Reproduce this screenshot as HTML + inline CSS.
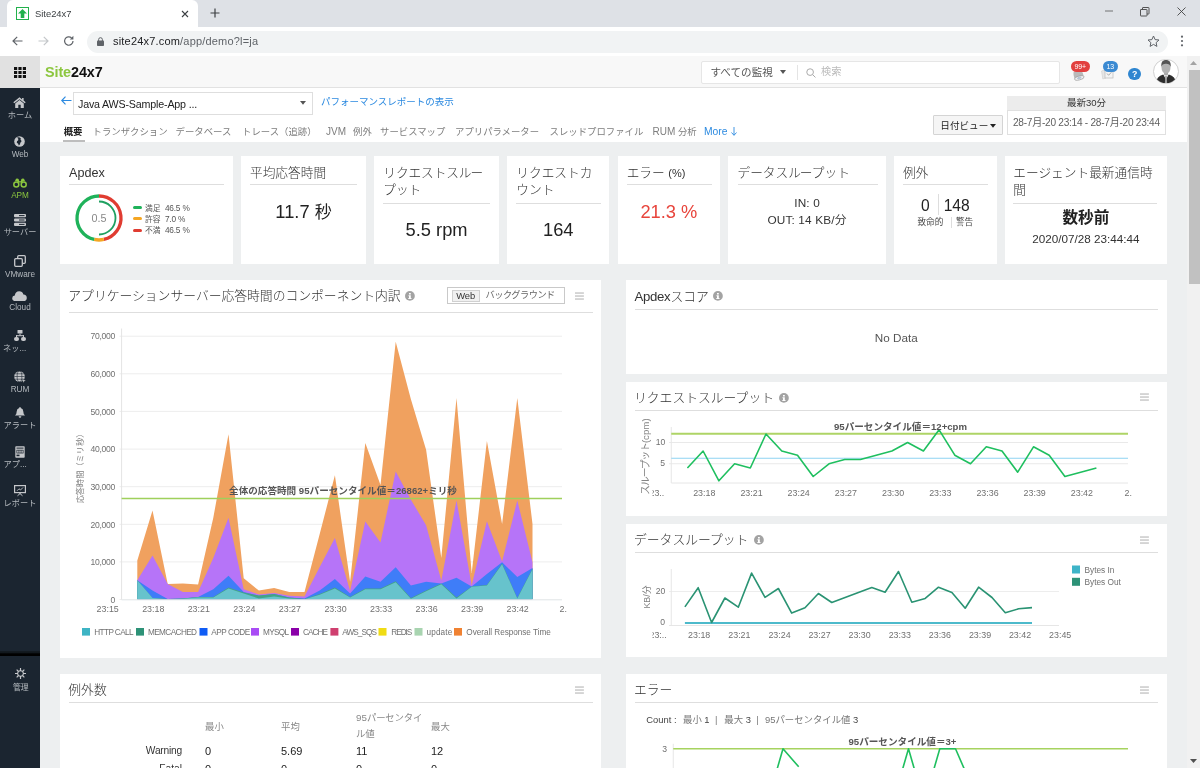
<!DOCTYPE html>
<html lang="ja">
<head>
<meta charset="utf-8">
<title>Site24x7</title>
<style>
*{box-sizing:border-box;margin:0;padding:0}
html,body{width:1200px;height:768px;overflow:hidden;background:#edeff0}
body{will-change:transform;font-family:"Liberation Sans","Noto Sans CJK JP",sans-serif;color:#333;position:relative;font-size:10px}
.a{position:absolute}
.t{position:absolute;white-space:nowrap;line-height:1}
.card{position:absolute;background:#fff}
.hr{position:absolute;height:1px;background:#dedede}
svg{position:absolute;overflow:visible}
.ct{font-size:12.800px;color:#333;font-weight:300;letter-spacing:0}

.sl{position:absolute;left:0;width:40px;text-align:center;white-space:nowrap;line-height:1;font-size:8.2px;color:#b4b9be}
.si{position:absolute}
.tb{position:absolute;top:126.600px;white-space:nowrap;line-height:1;font-size:9.400px;color:#7d7d7d}
.kt{position:absolute;white-space:nowrap;line-height:17.300px;font-size:12.700px;color:#333;font-weight:300}
.kv{position:absolute;white-space:nowrap;line-height:1;text-align:center;color:#222}

</style>
</head>
<body>
<!-- chrome -->
<div class="a" style="left:0;top:0;width:1200px;height:27px;background:#dee1e6"></div>
<div class="a" style="left:7px;top:0;width:191px;height:27px;background:#fff;border-radius:6px 6px 0 0"></div>
<div class="a" style="left:0;top:27px;width:1200px;height:29px;background:#fff"></div>
<!-- favicon -->
<div class="a" style="left:16px;top:7px;width:13px;height:13px;border:1px solid #22b14c;background:#fff"></div>
<svg style="left:18px;top:9px" width="9" height="9" viewBox="0 0 9 9"><path d="M4.5 0 L9 4.5 H6.3 V9 H2.7 V4.5 H0 Z" fill="#22b14c"/></svg>
<div class="t" style="left:35px;top:9px;font-size:9.4px;color:#3c4043">Site24x7</div>
<svg style="left:181px;top:10px" width="8" height="8" viewBox="0 0 8 8"><path d="M1 1 L7 7 M7 1 L1 7" stroke="#3c4043" stroke-width="1.1" fill="none"/></svg>
<svg style="left:210px;top:8px" width="10" height="10" viewBox="0 0 10 10"><path d="M5 0.5 V9.5 M0.5 5 H9.5" stroke="#3c4043" stroke-width="1.2" fill="none"/></svg>
<!-- window controls -->
<svg style="left:1105px;top:10px" width="10" height="2" viewBox="0 0 10 2"><path d="M0 1 H8" stroke="#555" stroke-width="0.800"/></svg>
<svg style="left:1140px;top:7px" width="10" height="10" viewBox="0 0 10 10"><rect x="0.5" y="2.5" width="6.5" height="6.5" rx="0.400" fill="none" stroke="#444" stroke-width="0.9"/><path d="M2.5 2.5 V1 Q2.5 0.5 3 0.5 H8.500 Q9 0.5 9 1 V6.500 Q9 7 8.500 7 H7" fill="none" stroke="#444" stroke-width="0.9"/></svg>
<svg style="left:1177px;top:7px" width="9" height="9" viewBox="0 0 9 9"><path d="M0.5 0.5 L8.5 8.5 M8.5 0.5 L0.5 8.5" stroke="#444" stroke-width="0.9" fill="none"/></svg>
<!-- nav -->
<svg style="left:12px;top:36px" width="11" height="10" viewBox="0 0 11 10"><path d="M5.2 0.8 L1 5 L5.2 9.2 M1 5 H10.5" stroke="#5f6368" stroke-width="1.2" fill="none"/></svg>
<svg style="left:38px;top:36px" width="11" height="10" viewBox="0 0 11 10"><path d="M5.8 0.8 L10 5 L5.8 9.2 M10 5 H0.5" stroke="#c4c7ca" stroke-width="1.2" fill="none"/></svg>
<svg style="left:63px;top:35px" width="12" height="12" viewBox="0 0 12 12"><path d="M10 6 A4.2 4.2 0 1 1 8.6 2.9" stroke="#5f6368" stroke-width="1.2" fill="none"/><path d="M10.4 0.8 V4.4 H6.8 Z" fill="#5f6368"/></svg>
<div class="a" style="left:87px;top:30.500px;width:1081px;height:22px;border-radius:11px;background:#f1f3f4"></div>
<svg style="left:97px;top:37px" width="7" height="9" viewBox="0 0 7 9"><rect x="0" y="3.6" width="7" height="5.4" rx="0.8" fill="#5f6368"/><path d="M1.6 4 V2.6 A1.9 1.9 0 0 1 5.4 2.6 V4" stroke="#5f6368" stroke-width="1" fill="none"/></svg>
<div class="t" style="left:113px;top:36px;font-size:11px;color:#202124;letter-spacing:0.19px">site24x7.com<span style="color:#5f6368">/app/demo?l=ja</span></div>
<svg style="left:1147px;top:35px" width="13" height="12" viewBox="0 0 13 12"><path d="M6.5 1 L8.1 4.6 L12 5 L9.1 7.6 L9.9 11.4 L6.5 9.4 L3.1 11.4 L3.9 7.6 L1 5 L4.9 4.6 Z" fill="none" stroke="#5f6368" stroke-width="1"/></svg>
<svg style="left:1180px;top:35px" width="4" height="12" viewBox="0 0 4 12"><circle cx="2" cy="1.7" r="1.1" fill="#5f6368"/><circle cx="2" cy="6" r="1.1" fill="#5f6368"/><circle cx="2" cy="10.3" r="1.1" fill="#5f6368"/></svg>

<!-- header -->
<div class="a" style="left:0;top:56px;width:1200px;height:32px;background:#f8f8f8;border-bottom:1px solid #e2e2e2"></div>
<div class="a" style="left:0;top:56px;width:40px;height:32px;background:#e1e1e1"></div>
<svg style="left:14px;top:67px" width="12" height="11" viewBox="0 0 12 11"><g fill="#111"><rect x="0" y="0" width="3.2" height="3"/><rect x="4.4" y="0" width="3.2" height="3"/><rect x="8.8" y="0" width="3.2" height="3"/><rect x="0" y="4" width="3.2" height="3"/><rect x="4.4" y="4" width="3.2" height="3"/><rect x="8.8" y="4" width="3.2" height="3"/><rect x="0" y="8" width="3.2" height="3"/><rect x="4.4" y="8" width="3.2" height="3"/><rect x="8.8" y="8" width="3.2" height="3"/></g></svg>
<div class="t" style="left:45px;top:65px;font-size:14.4px;font-weight:bold;letter-spacing:-0.1px;color:#111"><span style="color:#8cc63f">Site</span>24x7</div>
<!-- search -->
<div class="a" style="left:701px;top:61px;width:359px;height:23px;background:#fff;border:1px solid #e6e6e6;border-radius:2px"></div>
<div class="a" style="left:797px;top:65px;width:1px;height:15px;background:#e4e4e4"></div>
<div class="t" style="left:710.500px;top:66.800px;font-size:10.600px;color:#555">すべての監視</div>
<svg style="left:780px;top:70px" width="6" height="4" viewBox="0 0 6 4"><path d="M0 0 H6 L3 4 Z" fill="#555"/></svg>
<svg style="left:806px;top:67.500px" width="10" height="10" viewBox="0 0 9 9"><circle cx="3.7" cy="3.7" r="3" fill="none" stroke="#aaa" stroke-width="0.9"/><path d="M6 6 L8.5 8.5" stroke="#aaa" stroke-width="0.9"/></svg>
<div class="t" style="left:821px;top:67px;font-size:10.2px;color:#bbb">検索</div>
<!-- alarm icon + badge -->
<svg style="left:1072.500px;top:69.500px" width="13" height="11" viewBox="0 0 13 11"><g transform="rotate(-14 6 6)"><path d="M1.500 1 H9.500 Q11 4.500 10.500 7.500 H1 Q0.500 4 1.500 1Z" fill="#b9b9b9"/><ellipse cx="5.800" cy="8" rx="4.900" ry="1.900" fill="#f2f2f2" stroke="#9d9d9d" stroke-width="0.700"/><ellipse cx="5.800" cy="8" rx="1.800" ry="0.600" fill="none" stroke="#6f8fb5" stroke-width="0.500"/></g></svg>
<div class="a" style="left:1071px;top:60.5px;width:18.5px;height:11px;border-radius:5.5px;background:#e2403f"></div>
<div class="t" style="left:1071px;top:62.5px;width:18.5px;text-align:center;font-size:7px;color:#fff;letter-spacing:-0.2px">99+</div>
<svg style="left:1101px;top:69px" width="13" height="11" viewBox="0 0 13 11"><path d="M0.5 2 L4 0.8 L5 9 L1.8 10 Z" fill="#e6e6e6" stroke="#c8c8c8" stroke-width="0.5"/><rect x="4" y="1.5" width="8" height="7.5" fill="#f4f4f4" stroke="#bbb" stroke-width="0.7"/><path d="M6 4.5 L7.6 6.3 L10.4 3.2" fill="none" stroke="#999" stroke-width="0.8"/></svg>
<div class="a" style="left:1103px;top:60.5px;width:14.6px;height:11px;border-radius:5.5px;background:#3b8ad2"></div>
<div class="t" style="left:1103px;top:62.5px;width:14.6px;text-align:center;font-size:7px;color:#fff">13</div>
<div class="a" style="left:1128.4px;top:67.7px;width:12.6px;height:12.6px;border-radius:50%;background:#2f86d0"></div>
<div class="t" style="left:1128.4px;top:69.800px;width:12.6px;text-align:center;font-size:8.800px;font-weight:bold;color:#fff">?</div>
<!-- avatar -->
<div class="a" style="left:1153.3px;top:58.6px;width:25.4px;height:25.4px;border-radius:50%;background:#fff;border:1px solid #d0d0d0;overflow:hidden">
<svg style="left:-0.300px;top:-0.500px" width="24" height="24" viewBox="0 0 24 24"><rect x="10" y="12.500" width="4" height="4" fill="#a6a6a6"/><ellipse cx="12" cy="8.600" rx="4.500" ry="6.200" fill="#b2b2b2"/><path d="M7.300 8 Q6.600 1 12 0.800 Q17.400 1 16.700 8 Q15.800 4.600 12 4.700 Q8.200 4.600 7.300 8Z" fill="#555"/><path d="M2 24 Q2.500 17.500 9.200 15.600 L12 19.500 L14.800 15.600 Q21.500 17.500 22 24 Z" fill="#2d2d2d"/><path d="M9.800 15.400 L12 21.500 L14.200 15.400 L12 16.600 Z" fill="#ececec"/><path d="M11.300 16.800 H12.700 L13.100 24 H10.900 Z" fill="#9a9a9a"/></svg>
</div>

<!-- sidebar -->
<div class="a" style="left:0;top:88px;width:40px;height:680px;background:#1b2530"></div>
<div class="a" style="left:0;top:650.500px;width:40px;height:5.500px;background:linear-gradient(#141b22 0,#10161b 40%,#000 55%,#000 100%)"></div>
<!-- home -->
<svg class="si" style="left:13px;top:97px" width="13" height="11" viewBox="0 0 13 11"><path d="M6.5 0.300 L0.300 5.300 L1.300 6.300 L6.5 2.200 L11.7 6.300 L12.7 5.300 L10.6 3.600 V0.900 H9.100 V2.400 Z" fill="#c6c8cb"/><path d="M2.200 6.500 L6.5 3.100 L10.8 6.500 V11 H7.700 V7.800 H5.300 V11 H2.200 Z" fill="#c6c8cb"/></svg>
<div class="sl" style="top:111.500px">ホーム</div>
<!-- web -->
<svg class="si" style="left:14px;top:136px" width="11" height="11" viewBox="0 0 11 11"><circle cx="5.500" cy="5.500" r="5.300" fill="#c6c8cb"/><path d="M3 1.500 Q5 2.500 4.200 4.200 Q2.500 5 2.800 6.800 Q4.500 7.200 4.800 9.500 Q6.500 8.500 6.300 6.800 Q8 6 7.300 4.500 Q6 4 6.800 2.200 Q5.500 0.800 3 1.500Z" fill="#1b2530"/></svg>
<div class="sl" style="top:150.500px">Web</div>
<!-- apm -->
<svg class="si" style="left:12.500px;top:177.500px" width="14" height="10" viewBox="0 0 14 10"><g fill="none" stroke="#8cc63f" stroke-width="1.500"><circle cx="3.300" cy="6.400" r="2.500"/><circle cx="10.700" cy="6.400" r="2.500"/></g><path d="M1.800 3.600 L3 0.800 Q4.500 0 5.600 1 L6.200 3.200 H7.800 L8.400 1 Q9.500 0 11 0.800 L12.200 3.600 L10.700 3.100 L8.300 4.600 H5.700 L3.300 3.100 Z" fill="#8cc63f"/></svg>
<div class="sl" style="top:191.500px;color:#8cc63f">APM</div>
<!-- server -->
<svg class="si" style="left:14px;top:214px" width="12" height="12" viewBox="0 0 12 12"><g fill="#c6c8cb"><rect x="0" y="0" width="12" height="3.200" rx="1"/><rect x="0" y="4.400" width="12" height="3.200" rx="1"/><rect x="0" y="8.800" width="12" height="3.200" rx="1"/></g><g fill="#1b2530"><rect x="5" y="1.100" width="5.500" height="1"/><rect x="5" y="5.500" width="5.500" height="1"/><rect x="5" y="9.900" width="5.500" height="1"/></g></svg>
<div class="sl" style="top:228.500px">サーバー</div>
<!-- vmware -->
<svg class="si" style="left:14px;top:255px" width="12" height="12" viewBox="0 0 12 12"><g fill="none" stroke="#c6c8cb" stroke-width="1.300"><rect x="3.700" y="0.700" width="7.600" height="7.600" rx="1"/><rect x="0.700" y="3.700" width="7.600" height="7.600" rx="1" fill="#1b2530"/></g></svg>
<div class="sl" style="top:271px">VMware</div>
<!-- cloud -->
<svg class="si" style="left:12px;top:291px" width="15" height="10" viewBox="0 0 15 10"><path d="M3.500 10 Q0.200 10 0.200 7.200 Q0.200 4.800 2.800 4.500 Q3.200 0.500 7.200 0.300 Q10.500 0.300 11.400 3.500 Q14.800 3.800 14.800 6.900 Q14.800 10 11.500 10 Z" fill="#c6c8cb"/></svg>
<div class="sl" style="top:303.500px">Cloud</div>
<!-- network -->
<svg class="si" style="left:14px;top:330px" width="12" height="11" viewBox="0 0 12 11"><g fill="#c6c8cb"><rect x="3.500" y="0" width="5" height="3.600" rx="0.500"/><rect x="0" y="7" width="5" height="4" rx="2"/><rect x="7" y="7" width="5" height="4" rx="2"/><rect x="5.500" y="3.600" width="1" height="2"/><rect x="2" y="5.200" width="8" height="1"/><rect x="2" y="5.200" width="1" height="2"/><rect x="9" y="5.200" width="1" height="2"/></g></svg>
<div class="sl" style="top:344.500px;left:3px;text-align:left">ネッ...</div>
<!-- rum -->
<svg class="si" style="left:14px;top:371px" width="12" height="12" viewBox="0 0 12 12"><circle cx="5.500" cy="5.500" r="5.300" fill="#c6c8cb"/><g fill="none" stroke="#1b2530" stroke-width="0.600"><ellipse cx="5.500" cy="5.500" rx="2.400" ry="5.300"/><path d="M0.200 5.500 H10.800 M1 2.800 H10 M1 8.200 H10"/></g><path d="M8 8 L12 9.500 L10.300 10.300 L9.500 12 Z" fill="#c6c8cb" stroke="#1b2530" stroke-width="0.400"/></svg>
<div class="sl" style="top:385.500px">RUM</div>
<!-- alert -->
<svg class="si" style="left:15px;top:407px" width="10" height="11" viewBox="0 0 10 11"><path d="M5 0 Q5.800 0 5.800 0.900 Q8.300 1.700 8.300 4.500 Q8.300 7.300 10 8.500 H0 Q1.700 7.300 1.700 4.500 Q1.700 1.700 4.200 0.900 Q4.200 0 5 0Z" fill="#c6c8cb"/><path d="M3.600 9.300 H6.400 Q6.200 10.800 5 10.800 Q3.800 10.800 3.600 9.300Z" fill="#c6c8cb"/></svg>
<div class="sl" style="top:422px">アラート</div>
<!-- app -->
<svg class="si" style="left:15px;top:446px" width="10" height="12" viewBox="0 0 10 12"><rect x="0.300" y="0.300" width="9.400" height="11.400" rx="0.800" fill="#c6c8cb"/><g fill="#1b2530"><rect x="1.500" y="1.600" width="7" height="1"/><rect x="1.500" y="3.800" width="7" height="3.600"/><rect x="1.500" y="8.600" width="3" height="1.600"/></g><g fill="#c6c8cb"><rect x="2.200" y="4.500" width="1.400" height="2.200"/><rect x="4.300" y="4.500" width="1.400" height="2.200"/><rect x="6.400" y="4.500" width="1.400" height="2.200"/></g></svg>
<div class="sl" style="top:461px;left:3.500px;text-align:left">アプ...</div>
<!-- report -->
<svg class="si" style="left:14px;top:485px" width="12" height="11" viewBox="0 0 12 11"><rect x="0.600" y="0.600" width="10.800" height="7" fill="none" stroke="#c6c8cb" stroke-width="1.200"/><path d="M3 5.800 L5 3.800 L6.500 5 L9 2.500" fill="none" stroke="#c6c8cb" stroke-width="0.900"/><path d="M6 7.600 V9 M3.500 10.800 L6 8.600 L8.500 10.800" fill="none" stroke="#c6c8cb" stroke-width="1"/></svg>
<div class="sl" style="top:499.500px">レポート</div>
<!-- admin -->
<svg class="si" style="left:15.300px;top:668.200px" width="11" height="11" viewBox="0 0 12 12"><g stroke="#c6c8cb" stroke-width="1.300"><path d="M6 0 V12 M0 6 H12 M1.800 1.800 L10.200 10.200 M10.200 1.800 L1.800 10.200"/></g><circle cx="6" cy="6" r="3.600" fill="#c6c8cb"/><circle cx="6" cy="6" r="2.500" fill="#1b2530"/></svg>
<div class="sl" style="top:684.300px;left:0.800px;font-size:7.900px">管理</div>

<!-- subheader -->
<div class="a" style="left:40px;top:88px;width:1147px;height:54px;background:#fff"></div>
<svg style="left:60.500px;top:96px" width="10.500" height="9" viewBox="0 0 10.500 9"><path d="M4.500 0.700 L0.800 4.500 L4.500 8.300 M0.800 4.500 H10.500" fill="none" stroke="#2c8ae0" stroke-width="1.150"/></svg>
<div class="a" style="left:73px;top:92px;width:240px;height:22.500px;border:1px solid #dedede;background:#fff"></div>
<div class="t" style="left:78px;top:99px;font-size:10.700px;color:#222;letter-spacing:-0.180px">Java AWS-Sample-App ...</div>
<svg style="left:300px;top:101px" width="6" height="4" viewBox="0 0 6 4"><path d="M0 0 H6 L3 3.800 Z" fill="#555"/></svg>
<div class="t" style="left:321px;top:96.500px;font-size:9.500px;color:#2c8ae0">パフォーマンスレポートの表示</div>
<div class="tb" style="left:63.700px;color:#222;font-weight:bold">概要</div>
<div class="a" style="left:62.700px;top:139.600px;width:22.300px;height:2px;background:#bdbdbd"></div>
<div class="tb" style="left:92.500px">トランザクション</div>
<div class="tb" style="left:175.500px">データベース</div>
<div class="tb" style="left:242px">トレース（追跡）</div>
<div class="tb" style="left:326px;font-size:10px;top:127.300px">JVM</div>
<div class="tb" style="left:353px">例外</div>
<div class="tb" style="left:380px">サービスマップ</div>
<div class="tb" style="left:455px">アプリパラメーター</div>
<div class="tb" style="left:549.500px">スレッドプロファイル</div>
<div class="tb" style="left:652.500px"><span style="font-size:10px">RUM</span> 分析</div>
<div class="tb" style="left:704px;color:#2c8ae0;font-size:10.300px;top:127.300px">More</div>
<svg style="left:731px;top:127px" width="6" height="9" viewBox="0 0 6 9"><path d="M3 0 V8.200 M0.500 5.500 L3 8.300 L5.500 5.500" fill="none" stroke="#2c8ae0" stroke-width="0.900"/></svg>
<!-- date view -->
<div class="a" style="left:933.400px;top:115px;width:69.400px;height:20.300px;border:1px solid #d4d4d4;background:#f5f5f5;border-radius:1px"></div>
<div class="t" style="left:940.300px;top:120.500px;font-size:9.600px;color:#222">日付ビュー</div>
<svg style="left:990px;top:124px" width="6" height="4" viewBox="0 0 6 4"><path d="M0 0 H6 L3 3.800 Z" fill="#222"/></svg>
<div class="a" style="left:1006.700px;top:96px;width:159.800px;height:14.500px;background:#ececec"></div>
<div class="t" style="left:1006.700px;top:98px;width:159.800px;text-align:center;font-size:9.500px;color:#333">最新30分</div>
<div class="a" style="left:1006.700px;top:110px;width:159.800px;height:24.700px;background:#fff;border:1px solid #e0e0e0"></div>
<div class="t" style="left:1013px;top:117.800px;font-size:10.100px;color:#606060;letter-spacing:-0.260px">28-7月-20 23:14 - 28-7月-20 23:44</div>

<!-- kpi -->
<!-- Apdex -->
<div class="card" style="left:60px;top:156px;width:173px;height:108px"></div>
<div class="kt" style="left:69px;top:164.500px;font-size:12.600px">Apdex</div>
<div class="hr" style="left:69px;top:184.300px;width:155px"></div>
<svg style="left:75.400px;top:193.800px" width="48" height="48" viewBox="-24 -24 48 48">
<g fill="none" stroke-width="3.300">
<path d="M0 -22 A22 22 0 0 1 4.800 21.470" stroke="#e03c31"/>
<path d="M4.800 21.470 A22 22 0 0 1 -4.800 21.470" stroke="#f5a623"/>
<path d="M-4.800 21.470 A22 22 0 0 1 0 -22" stroke="#1fb25a"/>
<path d="M0 -16.500 A16.500 16.500 0 0 1 0 16.500" stroke="#1fa060" stroke-width="1.800"/>
</g>
<text x="0" y="3.900" text-anchor="middle" font-size="10.800" fill="#888" font-family="Liberation Sans, sans-serif">0.5</text>
</svg>
<div class="a" style="left:133px;top:205.900px;width:8.500px;height:3px;border-radius:1.500px;background:#1fb25a"></div>
<div class="a" style="left:133px;top:217.200px;width:8.500px;height:3px;border-radius:1.500px;background:#f5a623"></div>
<div class="a" style="left:133px;top:228.600px;width:8.500px;height:3px;border-radius:1.500px;background:#e03c31"></div>
<div class="t" style="left:145px;top:203.500px;font-size:7.800px;color:#555">満足&nbsp; <span style="font-size:8.300px;letter-spacing:-0.200px">46.5 %</span></div>
<div class="t" style="left:145px;top:214.800px;font-size:7.800px;color:#555">許容&nbsp; <span style="font-size:8.300px;letter-spacing:-0.200px">7.0 %</span></div>
<div class="t" style="left:145px;top:226.200px;font-size:7.800px;color:#555">不満&nbsp; <span style="font-size:8.300px;letter-spacing:-0.200px">46.5 %</span></div>
<!-- avg resp -->
<div class="card" style="left:241px;top:156px;width:125px;height:108px"></div>
<div class="kt" style="left:250px;top:164.500px">平均応答時間</div>
<div class="hr" style="left:250px;top:184.300px;width:107px"></div>
<div class="kv" style="left:241px;top:202.500px;width:125px;font-size:18.300px">11.7 <span style="font-size:17px">秒</span></div>
<!-- req throughput -->
<div class="card" style="left:374.300px;top:156px;width:124.500px;height:108px"></div>
<div class="kt" style="left:383.300px;top:164.500px;letter-spacing:-0.100px">リクエストス<span style="letter-spacing:-1.100px">ル</span>ー<br>プット</div>
<div class="hr" style="left:383.300px;top:202.600px;width:107px"></div>
<div class="kv" style="left:374.300px;top:220.500px;width:124.500px;font-size:18.300px">5.5 rpm</div>
<!-- req count -->
<div class="card" style="left:507.300px;top:156px;width:102px;height:108px"></div>
<div class="kt" style="left:516.300px;top:164.500px">リクエストカ<br>ウント</div>
<div class="hr" style="left:516.300px;top:202.600px;width:84.500px"></div>
<div class="kv" style="left:507.300px;top:220.500px;width:102px;font-size:18.300px">164</div>
<!-- error -->
<div class="card" style="left:617.700px;top:156px;width:102.300px;height:108px"></div>
<div class="kt" style="left:626.700px;top:164.500px">エラー <span style="font-size:11px">(%)</span></div>
<div class="hr" style="left:626.700px;top:184.300px;width:85px"></div>
<div class="kv" style="left:617.700px;top:203px;width:102.300px;font-size:18.300px;color:#e8453c">21.3 %</div>
<!-- data throughput -->
<div class="card" style="left:728.300px;top:156px;width:157.500px;height:108px"></div>
<div class="kt" style="left:737.500px;top:164.500px">データス<span style="letter-spacing:-1.100px">ル</span>ープット</div>
<div class="hr" style="left:737.500px;top:184.300px;width:140px"></div>
<div class="kv" style="left:728.300px;top:197.500px;width:157.500px;font-size:11.800px;letter-spacing:0.150px;color:#333">IN: 0</div>
<div class="kv" style="left:728.300px;top:215.300px;width:157.500px;font-size:11.800px;letter-spacing:0.150px;color:#333">OUT: 14 KB/分</div>
<!-- exceptions -->
<div class="card" style="left:894.200px;top:156px;width:102.500px;height:108px"></div>
<div class="kt" style="left:903px;top:164.500px">例外</div>
<div class="hr" style="left:903px;top:184.300px;width:85.300px"></div>
<div class="kv" style="left:915.400px;top:197.500px;width:20px;font-size:15.600px">0</div>
<div class="a" style="left:938px;top:194px;width:1px;height:21px;background:#ddd"></div>
<div class="kv" style="left:941.700px;top:197.500px;width:30px;font-size:15.600px">148</div>
<div class="t" style="left:917.500px;top:218.300px;font-size:8.600px;color:#444">致命的</div>
<div class="a" style="left:950.500px;top:217px;width:1px;height:11px;background:#ddd"></div>
<div class="t" style="left:956px;top:218.300px;font-size:8.600px;color:#444">警告</div>
<!-- agent -->
<div class="card" style="left:1005px;top:156px;width:161.700px;height:108px"></div>
<div class="kt" style="left:1013.300px;top:164.500px">エージェント最新通信時<br>間</div>
<div class="hr" style="left:1013.300px;top:202.600px;width:144.200px"></div>
<div class="kv" style="left:1005px;top:210.300px;width:161.700px;font-size:15.600px;font-weight:bold">数秒前</div>
<div class="kv" style="left:1005px;top:233px;width:161.700px;font-size:11.700px;color:#333">2020/07/28 23:44:44</div>

<!-- mainchart -->
<div class="card" style="left:60px;top:280px;width:541px;height:377.500px"></div>
<div class="t ct" style="left:68.300px;top:290px">アプリケーションサーバー応答時間のコンポーネント内訳</div>
<svg style="left:405.400px;top:291.100px" width="9.800" height="9.800" viewBox="0 0 9.800 9.800"><circle cx="4.900" cy="4.900" r="4.900" fill="#a3a3a3"/><path d="M4 2 H5.800 V3.500 H4 Z M3.500 4.300 H5.800 V7 H6.500 V7.900 H3.300 V7 H4 V5.200 H3.500 Z" fill="#fff"/></svg>
<div class="hr" style="left:69px;top:312px;width:523.500px"></div>
<div class="a" style="left:447px;top:287px;width:118px;height:17px;border:1px solid #c9c9c9;background:#fff"></div>
<div class="a" style="left:451.500px;top:289.500px;width:28.500px;height:12px;border:1px solid #d0d0d0;background:#f0f0f0"></div>
<div class="t" style="left:451.500px;top:291px;width:28.500px;text-align:center;font-size:9.400px;color:#333">Web</div>
<div class="t" style="left:485.500px;top:291px;font-size:9.200px;color:#666;letter-spacing:-0.480px">バックグラウンド</div>
<svg style="left:575px;top:292px" width="9" height="8" viewBox="0 0 9 8"><g fill="#d0d0d0"><rect x="0" y="0.200" width="8.900" height="1.700"/><rect x="0" y="3.200" width="8.900" height="1.700"/><rect x="0" y="6.200" width="8.900" height="1.700"/></g></svg>
<svg style="left:0;top:0" width="1200" height="768" viewBox="0 0 1200 768" font-family="Liberation Sans, Noto Sans CJK JP, sans-serif">
<path d="M119.500 599.5 H562" stroke="#ededed" stroke-width="1"/>
<text x="115" y="602.7" text-anchor="end" font-size="8.600" letter-spacing="-0.300" fill="#707070">0</text>
<path d="M119.500 561.9 H562" stroke="#ededed" stroke-width="1"/>
<text x="115" y="565.1" text-anchor="end" font-size="8.600" letter-spacing="-0.300" fill="#707070">10,000</text>
<path d="M119.500 524.3 H562" stroke="#ededed" stroke-width="1"/>
<text x="115" y="527.5" text-anchor="end" font-size="8.600" letter-spacing="-0.300" fill="#707070">20,000</text>
<path d="M119.500 486.7 H562" stroke="#ededed" stroke-width="1"/>
<text x="115" y="489.9" text-anchor="end" font-size="8.600" letter-spacing="-0.300" fill="#707070">30,000</text>
<path d="M119.500 449.1 H562" stroke="#ededed" stroke-width="1"/>
<text x="115" y="452.3" text-anchor="end" font-size="8.600" letter-spacing="-0.300" fill="#707070">40,000</text>
<path d="M119.500 411.4 H562" stroke="#ededed" stroke-width="1"/>
<text x="115" y="414.6" text-anchor="end" font-size="8.600" letter-spacing="-0.300" fill="#707070">50,000</text>
<path d="M119.500 373.8 H562" stroke="#ededed" stroke-width="1"/>
<text x="115" y="377.0" text-anchor="end" font-size="8.600" letter-spacing="-0.300" fill="#707070">60,000</text>
<path d="M119.500 336.2 H562" stroke="#ededed" stroke-width="1"/>
<text x="115" y="339.4" text-anchor="end" font-size="8.600" letter-spacing="-0.300" fill="#707070">70,000</text>
<path d="M121.600 328.500 V599.700" stroke="#e4e4e4" stroke-width="1"/>
<polygon points="137.3,560.6 152.5,510.6 167.7,584 182.9,583.5 198.1,584.6 213.3,517.7 228.5,434.3 243.7,578.3 258.9,590.6 274.1,588 289.3,591.9 304.5,591.9 319.7,534 334.9,475.3 350.1,581.8 365.3,443.1 380.5,485.1 395.7,341.7 410.9,399.3 426.1,449.7 441.3,558 456.5,398.1 471.7,573 486.9,441 502.1,524 517.3,398 532.5,524 532.5,599.2 137.3,599.2" fill="#f0a15f" />
<polygon points="137.3,580.2 152.5,555.4 167.7,584 182.9,591.9 198.1,591.9 213.3,558 228.5,517.7 243.7,589.3 258.9,594.5 274.1,593 289.3,595.8 304.5,596.5 319.7,567 334.9,538 350.1,591 365.3,521.6 380.5,542.4 395.7,471.6 410.9,499.7 426.1,525.3 441.3,580.5 456.5,500.5 471.7,585.6 486.9,521.2 502.1,561.4 517.3,500.5 532.5,562.2 532.5,599.2 137.3,599.2" fill="#b674f8" />
<polygon points="137.3,580.2 152.5,590.6 167.7,599 182.9,598.4 198.1,597 213.3,589.3 228.5,575.7 243.7,591.9 258.9,595.8 274.1,594 289.3,597.6 304.5,598.6 319.7,590.6 334.9,578.9 350.1,593.5 365.3,576.4 380.5,581.8 395.7,567.2 410.9,585.5 426.1,581.8 441.3,583.6 456.5,577.8 471.7,586.4 486.9,573.9 502.1,562.2 517.3,577 532.5,568 532.5,599.2 137.3,599.2" fill="#3f7df8" />
<polygon points="137.3,580.2 152.5,598 167.7,599 182.9,598.5 198.1,597 213.3,597 228.5,587.5 243.7,592.5 258.9,595.5 274.1,594 289.3,597.6 304.5,599 319.7,594 334.9,587.5 350.1,597 365.3,588.5 380.5,588.5 395.7,581.3 410.9,598 426.1,590.5 441.3,583.6 456.5,597.5 471.7,586.4 486.9,585 502.1,563.5 517.3,598 532.5,568.5 532.5,599.2 137.3,599.2" fill="#43a487" />
<polygon points="137.3,580.2 152.5,598 167.7,599.2 182.9,598.8 198.1,597.5 213.3,597.5 228.5,588.5 243.7,593.5 258.9,598.5 274.1,596.5 289.3,598.5 304.5,599.2 319.7,594.8 334.9,588.4 350.1,597.6 365.3,589.3 380.5,589.3 395.7,582.2 410.9,598.8 426.1,591.3 441.3,584.2 456.5,598.4 471.7,586.8 486.9,585.6 502.1,564.3 517.3,598.6 532.5,569.2 532.5,599.2 137.3,599.2" fill="#67c3cc" />
<path d="M121.600 599.900 H562" stroke="#e6ebed" stroke-width="1"/>
<path d="M121.600 498.500 H562" stroke="#9fd05c" stroke-width="1.300"/>
<text x="343" y="494.200" text-anchor="middle" font-size="9.600" font-weight="bold" fill="#555">全体の応答時間 95パーセンタイル値＝26862+ミリ秒</text>
<text x="107.7" y="612" text-anchor="middle" font-size="8.900" fill="#707070">23:15</text>
<text x="153.3" y="612" text-anchor="middle" font-size="8.900" fill="#707070">23:18</text>
<text x="198.8" y="612" text-anchor="middle" font-size="8.900" fill="#707070">23:21</text>
<text x="244.4" y="612" text-anchor="middle" font-size="8.900" fill="#707070">23:24</text>
<text x="289.9" y="612" text-anchor="middle" font-size="8.900" fill="#707070">23:27</text>
<text x="335.5" y="612" text-anchor="middle" font-size="8.900" fill="#707070">23:30</text>
<text x="381.1" y="612" text-anchor="middle" font-size="8.900" fill="#707070">23:33</text>
<text x="426.6" y="612" text-anchor="middle" font-size="8.900" fill="#707070">23:36</text>
<text x="472.2" y="612" text-anchor="middle" font-size="8.900" fill="#707070">23:39</text>
<text x="517.7" y="612" text-anchor="middle" font-size="8.900" fill="#707070">23:42</text>
<text x="559.500" y="612" font-size="8.900" fill="#707070">2.</text>
<text transform="translate(82.500,466.500) rotate(-90)" text-anchor="middle" font-size="8.200" fill="#808080">応答時間（ミリ秒）</text>
<rect x="82" y="628" width="8" height="7.600" fill="#3eb4c4"/>
<text x="94.3" y="634.800" font-size="8.200" fill="#707070" textLength="39.2" lengthAdjust="spacing">HTTP CALL</text>
<rect x="136" y="628" width="8" height="7.600" fill="#2d9277"/>
<text x="148" y="634.800" font-size="8.200" fill="#707070" textLength="49" lengthAdjust="spacing">MEMCACHED</text>
<rect x="199.5" y="628" width="8" height="7.600" fill="#0f5cf5"/>
<text x="211.3" y="634.800" font-size="8.200" fill="#707070" textLength="39" lengthAdjust="spacing">APP CODE</text>
<rect x="251" y="628" width="8" height="7.600" fill="#a94cf5"/>
<text x="263" y="634.800" font-size="8.200" fill="#707070" textLength="26" lengthAdjust="spacing">MYSQL</text>
<rect x="291" y="628" width="8" height="7.600" fill="#8a00a8"/>
<text x="303" y="634.800" font-size="8.200" fill="#707070" textLength="25" lengthAdjust="spacing">CACHE</text>
<rect x="330.4" y="628" width="8" height="7.600" fill="#cf3f6f"/>
<text x="342.2" y="634.800" font-size="8.200" fill="#707070" textLength="34.7" lengthAdjust="spacing">AWS_SQS</text>
<rect x="378.5" y="628" width="8" height="7.600" fill="#f0dc14"/>
<text x="391.3" y="634.800" font-size="8.200" fill="#707070" textLength="21" lengthAdjust="spacing">REDIS</text>
<rect x="414.5" y="628" width="8" height="7.600" fill="#a8d4b0"/>
<text x="426.6" y="634.800" font-size="8.200" fill="#707070" textLength="25.6" lengthAdjust="spacing">update</text>
<rect x="454" y="628" width="8" height="7.600" fill="#f08232"/>
<text x="466.3" y="634.800" font-size="8.200" fill="#707070" textLength="84.5" lengthAdjust="spacing">Overall Response Time</text>
</svg>
<!-- right -->
<div class="card" style="left:625.500px;top:280px;width:541.500px;height:94px"></div>
<div class="t ct" style="left:634.500px;top:290px"><span style="font-size:13.200px;letter-spacing:-0.300px">Apdex</span>スコア</div>
<svg style="left:713.300px;top:291.200px" width="9.800" height="9.800" viewBox="0 0 9.800 9.800"><circle cx="4.900" cy="4.900" r="4.900" fill="#a3a3a3"/><path d="M4 2 H5.800 V3.500 H4 Z M3.500 4.300 H5.800 V7 H6.500 V7.900 H3.300 V7 H4 V5.200 H3.500 Z" fill="#fff"/></svg>
<div class="hr" style="left:634.500px;top:309px;width:523.500px"></div>
<div class="t" style="left:625.500px;top:331.500px;width:541.500px;text-align:center;font-size:11.700px;color:#555">No Data</div>
<div class="card" style="left:625.500px;top:382px;width:541.500px;height:134.300px"></div>
<div class="t ct" style="left:634px;top:391.500px">リクエストスループット</div>
<svg style="left:779.350px;top:393.100px" width="9.800" height="9.800" viewBox="0 0 9.800 9.800"><circle cx="4.900" cy="4.900" r="4.900" fill="#a3a3a3"/><path d="M4 2 H5.800 V3.500 H4 Z M3.500 4.300 H5.800 V7 H6.500 V7.900 H3.300 V7 H4 V5.200 H3.500 Z" fill="#fff"/></svg>
<div class="hr" style="left:634.500px;top:410px;width:523.500px"></div>
<svg style="left:1140px;top:393px" width="9" height="8" viewBox="0 0 9 8"><g fill="#d0d0d0"><rect x="0" y="0.200" width="8.900" height="1.700"/><rect x="0" y="3.200" width="8.900" height="1.700"/><rect x="0" y="6.200" width="8.900" height="1.700"/></g></svg>
<div class="card" style="left:625.500px;top:523.800px;width:541.500px;height:133.500px"></div>
<div class="t ct" style="left:634px;top:533.500px">データスループット</div>
<svg style="left:753.850px;top:534.600px" width="9.800" height="9.800" viewBox="0 0 9.800 9.800"><circle cx="4.900" cy="4.900" r="4.900" fill="#a3a3a3"/><path d="M4 2 H5.800 V3.500 H4 Z M3.500 4.300 H5.800 V7 H6.500 V7.900 H3.300 V7 H4 V5.200 H3.500 Z" fill="#fff"/></svg>
<div class="hr" style="left:634.500px;top:552px;width:523.500px"></div>
<svg style="left:1140px;top:535.5px" width="9" height="8" viewBox="0 0 9 8"><g fill="#d0d0d0"><rect x="0" y="0.200" width="8.900" height="1.700"/><rect x="0" y="3.200" width="8.900" height="1.700"/><rect x="0" y="6.200" width="8.900" height="1.700"/></g></svg>
<div class="card" style="left:625.500px;top:673.800px;width:541.500px;height:100px"></div>
<div class="t ct" style="left:634px;top:683.500px">エラー</div>
<div class="hr" style="left:634.500px;top:702px;width:523.500px"></div>
<svg style="left:1140px;top:685.5px" width="9" height="8" viewBox="0 0 9 8"><g fill="#d0d0d0"><rect x="0" y="0.200" width="8.900" height="1.700"/><rect x="0" y="3.200" width="8.900" height="1.700"/><rect x="0" y="6.200" width="8.900" height="1.700"/></g></svg>
<div class="t" style="left:646.3px;top:715.300px;font-size:9.400px;color:#777"><span style="color:#444">Count :</span></div>
<div class="t" style="left:683px;top:715.300px;font-size:9.400px;color:#777">最小 <span style="color:#444">1</span></div>
<div class="t" style="left:715px;top:715.300px;font-size:9.400px;color:#777">|</div>
<div class="t" style="left:724.3px;top:715.300px;font-size:9.400px;color:#777">最大 <span style="color:#444">3</span></div>
<div class="t" style="left:756.3px;top:715.300px;font-size:9.400px;color:#777">|</div>
<div class="t" style="left:765px;top:715.300px;font-size:9.400px;color:#777">95パーセンタイル値 <span style="color:#444">3</span></div>
<svg style="left:0;top:0" width="1200" height="768" viewBox="0 0 1200 768" font-family="Liberation Sans, Noto Sans CJK JP, sans-serif">
<clipPath id="c1"><rect x="640" y="418.500" width="20" height="80"/></clipPath>
<path d="M669 442.500 H1128 M669 463.750 H1128" stroke="#e9e9e9" stroke-width="1"/>
<path d="M671.250 427 V483 H1128" fill="none" stroke="#e6e6e6" stroke-width="1"/>
<text x="665" y="445" text-anchor="end" font-size="8.600" letter-spacing="-0.200" fill="#707070">10</text>
<text x="665" y="466.200" text-anchor="end" font-size="8.600" fill="#707070">5</text>
<g clip-path="url(#c1)"><text transform="translate(649,456.500) rotate(-90)" text-anchor="middle" font-size="9.700" fill="#858585" letter-spacing="-1">スループット<tspan letter-spacing="0">(cpm)</tspan></text></g>
<path d="M671.250 458.250 H1128" stroke="#8fd3f2" stroke-width="1"/>
<path d="M671.250 433.750 H1128" stroke="#aed466" stroke-width="1.900"/>
<polyline points="687.4,468.0 703.1,451.0 718.9,480.8 734.6,463.8 750.3,468.0 766.0,434.0 781.8,451.0 797.5,455.2 813.2,476.5 829.0,463.8 844.7,459.5 860.4,459.5 876.2,455.2 891.9,451.0 907.6,442.5 923.4,451.0 939.1,429.8 954.8,455.2 970.5,463.8 986.3,446.8 1002.0,451.0 1017.7,472.2 1033.5,446.8 1049.2,455.2 1064.9,476.5 1080.7,472.2 1096.4,468.0" fill="none" stroke="#1fbf5f" stroke-width="1.600" stroke-linejoin="round"/>
<text x="900.500" y="429.600" text-anchor="middle" font-size="9.600" font-weight="bold" fill="#555">95パーセンタイル値＝12+cpm</text>
<text x="704.3" y="496" text-anchor="middle" font-size="8.900" fill="#707070">23:18</text>
<text x="751.5" y="496" text-anchor="middle" font-size="8.900" fill="#707070">23:21</text>
<text x="798.7" y="496" text-anchor="middle" font-size="8.900" fill="#707070">23:24</text>
<text x="845.9" y="496" text-anchor="middle" font-size="8.900" fill="#707070">23:27</text>
<text x="893.1" y="496" text-anchor="middle" font-size="8.900" fill="#707070">23:30</text>
<text x="940.3" y="496" text-anchor="middle" font-size="8.900" fill="#707070">23:33</text>
<text x="987.5" y="496" text-anchor="middle" font-size="8.900" fill="#707070">23:36</text>
<text x="1034.7" y="496" text-anchor="middle" font-size="8.900" fill="#707070">23:39</text>
<text x="1081.9" y="496" text-anchor="middle" font-size="8.900" fill="#707070">23:42</text>
<clipPath id="c3"><rect x="652.500" y="485" width="30" height="20"/></clipPath><g clip-path="url(#c3)"><text x="649.500" y="496" font-size="8.900" fill="#707070">23..</text></g>
<text x="1124.500" y="496" font-size="8.900" fill="#707070">2.</text>
<path d="M669 591.500 H1059" stroke="#ededed" stroke-width="1"/>
<path d="M671.250 569 V625.500" fill="none" stroke="#e6e6e6" stroke-width="1"/>
<path d="M669 625.500 H1059" fill="none" stroke="#e6e6e6" stroke-width="1"/>
<text x="665" y="593.800" text-anchor="end" font-size="8.600" letter-spacing="-0.200" fill="#707070">20</text>
<text x="665" y="625.300" text-anchor="end" font-size="8.600" fill="#707070">0</text>
<text transform="translate(649.500,597) rotate(-90)" text-anchor="middle" font-size="8.900" fill="#808080">KB/分</text>
<path d="M684.9 623 H1032.0" stroke="#4dbacb" stroke-width="1.800"/>
<polyline points="684.9,606.9 698.2,587.7 711.6,622.5 724.9,598.0 738.3,607.2 751.6,573.1 765.0,597.3 778.4,588.5 791.7,613.1 805.0,607.7 818.4,593.5 831.8,602.5 845.1,597.5 858.4,592.4 871.8,587.6 885.1,592.3 898.5,571.5 911.8,602.2 925.2,598.4 938.5,587.2 951.9,592.4 965.2,608.2 978.6,587.2 992.0,597.5 1005.3,612.8 1018.6,608.8 1032.0,607.6" fill="none" stroke="#2a9373" stroke-width="1.600" stroke-linejoin="round"/>
<text x="699.2" y="638.300" text-anchor="middle" font-size="8.900" fill="#707070">23:18</text>
<text x="739.4" y="638.300" text-anchor="middle" font-size="8.900" fill="#707070">23:21</text>
<text x="779.5" y="638.300" text-anchor="middle" font-size="8.900" fill="#707070">23:24</text>
<text x="819.5" y="638.300" text-anchor="middle" font-size="8.900" fill="#707070">23:27</text>
<text x="859.6" y="638.300" text-anchor="middle" font-size="8.900" fill="#707070">23:30</text>
<text x="899.8" y="638.300" text-anchor="middle" font-size="8.900" fill="#707070">23:33</text>
<text x="939.9" y="638.300" text-anchor="middle" font-size="8.900" fill="#707070">23:36</text>
<text x="980.0" y="638.300" text-anchor="middle" font-size="8.900" fill="#707070">23:39</text>
<text x="1020.0" y="638.300" text-anchor="middle" font-size="8.900" fill="#707070">23:42</text>
<text x="1060.2" y="638.300" text-anchor="middle" font-size="8.900" fill="#707070">23:45</text>
<clipPath id="c2"><rect x="652.500" y="625" width="30" height="20"/></clipPath><g clip-path="url(#c2)"><text x="649.500" y="638.300" font-size="8.900" fill="#707070">23:..</text></g>
<rect x="1072" y="565.500" width="8" height="8" fill="#3eb4c8"/><rect x="1072" y="577.800" width="8" height="8" fill="#2d9277"/>
<text x="1084.500" y="572.700" font-size="8.300" fill="#707070">Bytes In</text><text x="1084.500" y="585" font-size="8.300" fill="#707070">Bytes Out</text>
<path d="M673.250 743.750 V768" stroke="#e6e6e6" stroke-width="1"/>
<path d="M673.250 748.750 H1128" stroke="#a6d35f" stroke-width="1.400"/>
<text x="667" y="751.800" text-anchor="end" font-size="8.600" fill="#707070">3</text>
<polyline points="767.3,802.8 783.0,748.8 798.7,766.8" fill="none" stroke="#1fbf5f" stroke-width="1.600" stroke-linejoin="round"/>
<polyline points="892.8,802.8 908.5,748.8 924.1,802.8 939.8,748.8 955.5,748.8 971.2,784.8" fill="none" stroke="#1fbf5f" stroke-width="1.600" stroke-linejoin="round"/>
<text x="902.500" y="744.600" text-anchor="middle" font-size="9.600" font-weight="bold" fill="#555">95パーセンタイル値＝3+</text>
</svg>
<!-- bottom -->
<div class="card" style="left:60px;top:673.800px;width:541px;height:100px"></div>
<div class="t ct" style="left:68.300px;top:683.500px">例外数</div>
<div class="hr" style="left:69px;top:702px;width:523.500px"></div>
<svg style="left:575px;top:685.5px" width="9" height="8" viewBox="0 0 9 8"><g fill="#d0d0d0"><rect x="0" y="0.200" width="8.900" height="1.700"/><rect x="0" y="3.200" width="8.900" height="1.700"/><rect x="0" y="6.200" width="8.900" height="1.700"/></g></svg>
<div class="t" style="left:205px;top:721.700px;font-size:9.400px;color:#888">最小</div>
<div class="t" style="left:281px;top:721.700px;font-size:9.400px;color:#888">平均</div>
<div class="t" style="left:431px;top:721.700px;font-size:9.400px;color:#888">最大</div>
<div class="t" style="left:356px;top:710.300px;font-size:9.400px;color:#888;line-height:16px;letter-spacing:-0.150px"><span style="letter-spacing:0;font-size:9.800px">95</span>パーセンタイ<br>ル値</div>
<div class="t" style="left:100px;top:746px;width:82px;text-align:right;font-size:10.200px;color:#333;letter-spacing:-0.200px">Warning</div>
<div class="t" style="left:205px;top:745.500px;font-size:11px;color:#222">0</div>
<div class="t" style="left:281px;top:745.500px;font-size:11px;color:#222">5.69</div>
<div class="t" style="left:356px;top:745.500px;font-size:11px;color:#222">11</div>
<div class="t" style="left:431px;top:745.500px;font-size:11px;color:#222">12</div>
<div class="t" style="left:100px;top:764px;width:82px;text-align:right;font-size:10.200px;color:#333">Fatal</div>
<div class="t" style="left:205px;top:763.500px;font-size:11px;color:#222">0</div>
<div class="t" style="left:281px;top:763.500px;font-size:11px;color:#222">0</div>
<div class="t" style="left:356px;top:763.500px;font-size:11px;color:#222">0</div>
<div class="t" style="left:431px;top:763.500px;font-size:11px;color:#222">0</div>
<!-- scroll -->
<div class="a" style="left:1187px;top:56px;width:13px;height:712px;background:#f1f1f1"></div>
<div class="a" style="left:1188.500px;top:70px;width:11.500px;height:214px;background:#c1c1c1"></div>
<svg style="left:1190px;top:61px" width="7" height="4" viewBox="0 0 7 4"><path d="M3.500 0 L7 4 H0 Z" fill="#a3a3a3"/></svg>
<svg style="left:1190px;top:759px" width="7" height="4" viewBox="0 0 7 4"><path d="M0 0 H7 L3.500 4 Z" fill="#505050"/></svg>
</body>
</html>
